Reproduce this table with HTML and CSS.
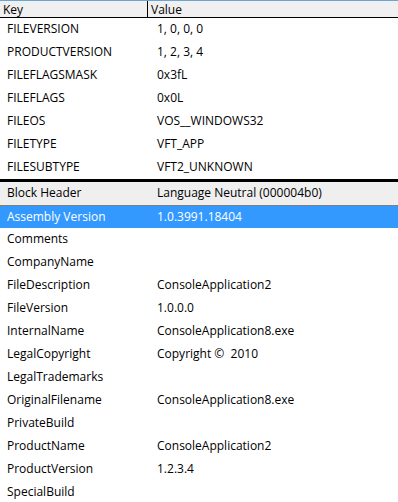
FILE: index.html
```html
<!DOCTYPE html>
<html>
<head>
<meta charset="utf-8">
<link rel="stylesheet" href="styles.css">
</head>
<body>
<div class="grid">
  <div class="head">
    <div class="hcell key">Key</div>
    <div class="hcell">Value</div>
  </div>
  <div class="rows">
    <div class="row"><span class="k">FILEVERSION</span><span class="v">1, 0, 0, 0</span></div>
    <div class="row"><span class="k">PRODUCTVERSION</span><span class="v">1, 2, 3, 4</span></div>
    <div class="row"><span class="k">FILEFLAGSMASK</span><span class="v">0x3fL</span></div>
    <div class="row"><span class="k">FILEFLAGS</span><span class="v">0x0L</span></div>
    <div class="row"><span class="k">FILEOS</span><span class="v">VOS__WINDOWS32</span></div>
    <div class="row"><span class="k">FILETYPE</span><span class="v">VFT_APP</span></div>
    <div class="row"><span class="k">FILESUBTYPE</span><span class="v">VFT2_UNKNOWN</span></div>
  </div>
  <div class="divider"></div>
  <div class="rows">
    <div class="row block"><span class="k">Block Header</span><span class="v">Language Neutral (000004b0)</span></div>
    <div class="row selected"><span class="k">Assembly Version</span><span class="v">1.0.3991.18404</span></div>
    <div class="row"><span class="k">Comments</span><span class="v"></span></div>
    <div class="row"><span class="k">CompanyName</span><span class="v"></span></div>
    <div class="row"><span class="k">FileDescription</span><span class="v">ConsoleApplication2</span></div>
    <div class="row"><span class="k">FileVersion</span><span class="v">1.0.0.0</span></div>
    <div class="row"><span class="k">InternalName</span><span class="v">ConsoleApplication8.exe</span></div>
    <div class="row"><span class="k">LegalCopyright</span><span class="v">Copyright ©&nbsp; 2010</span></div>
    <div class="row"><span class="k">LegalTrademarks</span><span class="v"></span></div>
    <div class="row"><span class="k">OriginalFilename</span><span class="v">ConsoleApplication8.exe</span></div>
    <div class="row"><span class="k">PrivateBuild</span><span class="v"></span></div>
    <div class="row"><span class="k">ProductName</span><span class="v">ConsoleApplication2</span></div>
    <div class="row"><span class="k">ProductVersion</span><span class="v">1.2.3.4</span></div>
    <div class="row"><span class="k">SpecialBuild</span><span class="v"></span></div>
  </div>
</div>
</body>
</html>
```

FILE: styles.css
```css
html, body {
  margin: 0;
  padding: 0;
  background: #ffffff;
}

body {
  font-family: "Open Sans", "Noto Sans", sans-serif;
  font-size: 12px;
  color: #000000;
  overflow: hidden;
}

.grid {
  display: flex;
  flex-direction: column;
  width: 398px;
}

/* column header strip */
.head {
  display: grid;
  grid-template-columns: 148px 1fr;
  height: 16px;
  border-top: 1px solid #6aa6d4;
  border-bottom: 1px solid #000000;
  background: #f0f0f0;
}

.hcell {
  padding-left: 3px;
  line-height: 17px;
}

.hcell.key {
  border-right: 1px solid #000000;
}

.rows {
  display: flex;
  flex-direction: column;
}

.row {
  display: grid;
  grid-template-columns: 150px 1fr;
  height: 23px;
  padding-bottom: 2px;
  align-items: center;
  box-sizing: border-box;
}

.k {
  padding-left: 7px;
  white-space: nowrap;
}

.v {
  padding-left: 7px;
  white-space: nowrap;
}

.divider {
  height: 3px;
  background: #000000;
}

.row.block {
  background: #efefef;
}

.row.selected {
  background: #3399ff;
  color: #ffffff;
  border-top: 1px dotted #cc6600;
}
```
